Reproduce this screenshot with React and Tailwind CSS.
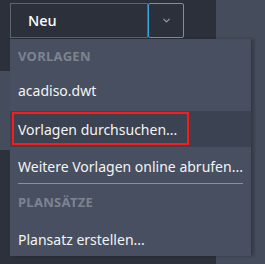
import { ChevronDown } from "lucide-react";

const font = { fontFamily: '"Noto Sans", "Open Sans", sans-serif' };

export default function App() {
  return (
    <div className="relative w-[265px] h-[264px] overflow-hidden bg-[#454c5b]" style={font}>
      {/* background behind the menu */}
      <div className="flex w-[216px] h-full flex-col">
        <div className="h-[71px] bg-[#2b303b] pl-[10px] pt-[3px]">
          <div className="flex h-[35px]">
            <div className="flex w-[138px] items-center border border-[#5d636e] pl-[17px] text-[14.5px] font-medium text-white">
              Neu
            </div>
            <button className="flex w-[36px] items-center justify-center rounded-[2px] border border-[#3aa7dc] text-[#9aa0aa]">
              <ChevronDown size={11} strokeWidth={2.5} />
            </button>
          </div>
        </div>
        <div className="h-[79px] bg-[#454c5b]" />
        <div className="flex-1 bg-[#2c313c]" />
      </div>

      {/* dropdown menu */}
      <div className="absolute left-[10px] top-[39px] w-[241px] bg-[#474f60] shadow-[3px_0_3px_rgba(0,0,0,0.25)] text-[14px] text-[#f4f4f4]">
        <div className="flex h-[33px] items-center pl-[8px] pt-[3px] text-[13px] font-bold tracking-[0.3px] text-[#7d8390]">
          VORLAGEN
        </div>
        <div className="flex h-[39px] items-center pl-[8px] pb-[3px]">acadiso.dwt</div>
        <div className="relative flex h-[36px] items-center bg-[#3b4251] pl-[8px]">
          Vorlagen durchsuchen...
          <div className="absolute left-[2px] top-[1px] h-[33px] w-[177px] border-2 border-[#ff1a1a]" />
        </div>
        <div className="flex h-[36px] items-center pl-[8px] pt-[3px]">Weitere Vorlagen online abrufen...</div>
        <div className="ml-[8px] h-px w-[225px] bg-[#8b909a]" />
        <div className="flex h-[38px] items-center pl-[8px] text-[13px] font-bold tracking-[0.3px] text-[#7d8390]">
          PLANSÄTZE
        </div>
        <div className="flex h-[34px] items-center pl-[8px] pt-[1px]">Plansatz erstellen...</div>
      </div>
    </div>
  );
}
